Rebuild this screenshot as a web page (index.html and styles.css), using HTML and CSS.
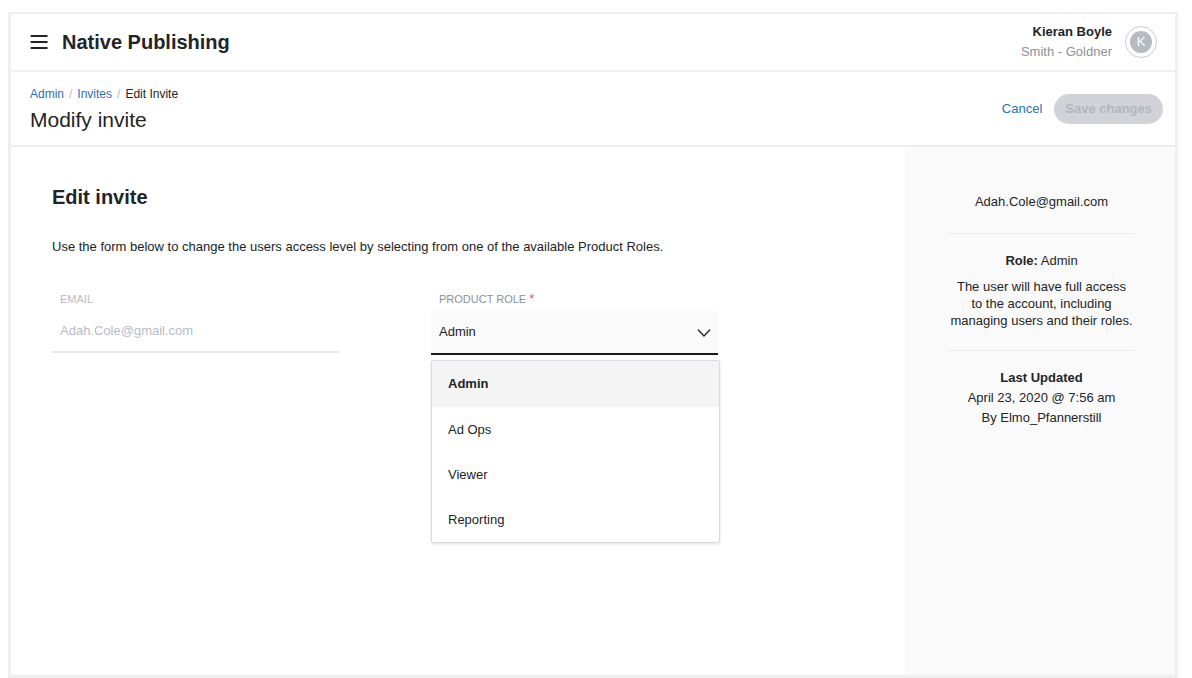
FILE: index.html
```html
<!DOCTYPE html>
<html lang="en">
<head>
<meta charset="utf-8">
<meta name="viewport" content="width=device-width, initial-scale=1">
<title>Native Publishing – Modify invite</title>
<link rel="stylesheet" href="styles.css">
</head>
<body>
<div class="frame">
  <header class="topbar">
    <button class="menu-button" type="button" aria-label="Open menu">
      <svg width="18" height="14" viewBox="0 0 18 14" fill="none" stroke="currentColor" stroke-width="1.8" stroke-linecap="round" aria-hidden="true">
        <path d="M1.3 1h15.6M1.3 7h15.6M1.3 13h15.6"/>
      </svg>
    </button>
    <div class="brand">Native Publishing</div>
    <div class="account">
      <div class="account-name">Kieran Boyle</div>
      <div class="account-org">Smith - Goldner</div>
    </div>
    <div class="avatar"><span class="avatar-letter">K</span></div>
  </header>

  <div class="pagebar">
    <div class="pagebar-titles">
      <nav class="breadcrumb" aria-label="Breadcrumb">
        <a href="#admin">Admin</a><span class="slash">/</span><a href="#invites">Invites</a><span class="slash">/</span><span>Edit Invite</span>
      </nav>
      <h1 class="page-title">Modify invite</h1>
    </div>
    <a class="cancel" href="#cancel">Cancel</a>
    <button class="save" type="submit" form="invite-form" disabled>Save changes</button>
  </div>

  <div class="content">
    <main class="main">
      <h2 class="section-title">Edit invite</h2>
      <p class="intro">Use the form below to change the users access level by selecting from one of the available Product Roles.</p>
      <form class="fields" id="invite-form">
        <div class="field field-disabled">
          <label class="label" for="email">EMAIL</label>
          <input class="control" id="email" type="email" value="Adah.Cole@gmail.com" disabled>
        </div>
        <div class="field">
          <label class="label" for="role">PRODUCT ROLE <span class="required">*</span></label>
          <div class="select-wrap">
            <select class="control select" id="role" required>
              <option selected>Admin</option>
              <option>Ad Ops</option>
              <option>Viewer</option>
              <option>Reporting</option>
            </select>
            <svg class="chevron" width="14" height="8" viewBox="0 0 14 8" fill="none" stroke="currentColor" stroke-width="1.3" stroke-linecap="round" stroke-linejoin="round" aria-hidden="true">
              <path d="M1.3 1L7 7l5.7-6"/>
            </svg>
            <ul class="menu" role="listbox" aria-label="Product role">
              <li class="menu-item menu-item-active" role="option" aria-selected="true">Admin</li>
              <li class="menu-item" role="option" aria-selected="false">Ad Ops</li>
              <li class="menu-item" role="option" aria-selected="false">Viewer</li>
              <li class="menu-item" role="option" aria-selected="false">Reporting</li>
            </ul>
          </div>
        </div>
      </form>
    </main>

    <aside class="sidebar">
      <section class="info">Adah.Cole@gmail.com</section>
      <section class="info">
        <div><strong>Role:</strong> Admin</div>
        <p class="role-text">The user will have full access<br>to the account, including<br>managing users and their roles.</p>
      </section>
      <section class="info">
        <div><strong>Last Updated</strong></div>
        <div>April 23, 2020 @ 7:56 am</div>
        <div>By Elmo_Pfannerstill</div>
      </section>
    </aside>
  </div>
</div>
</body>
</html>
```

FILE: styles.css
```css
* {
  box-sizing: border-box;
}

body {
  margin: 0;
  min-height: 100vh;
  padding: 12px 14px 0 8px;
  display: flex;
  background: #fff;
  color: #222427;
  font-family: "Liberation Sans", Arial, sans-serif;
  font-size: 13px;
  line-height: 20px;
}

a {
  color: #2a71b9;
  text-decoration: none;
}

button,
input,
select {
  font: inherit;
}

.frame {
  flex: 1;
  display: flex;
  flex-direction: column;
  border: 3px solid #efefef;
  border-top-width: 2px;
}

.topbar {
  display: flex;
  align-items: center;
  padding: 8px 18px 8px 19px;
  border-bottom: 2px solid #f0f0f0;
}

.menu-button {
  display: flex;
  padding: 0;
  border: 0;
  background: none;
  color: #222427;
}

.brand {
  flex: 1;
  padding-left: 14px;
  font-size: 20px;
  font-weight: bold;
  line-height: 28px;
}

.account {
  text-align: right;
}

.account-name {
  font-weight: bold;
}

.account-org {
  color: #8a9299;
}

.avatar {
  width: 32px;
  height: 32px;
  margin-left: 13px;
  padding: 4px;
  border: 1px solid #c9ccd4;
  border-radius: 50%;
}

.avatar-letter {
  display: flex;
  align-items: center;
  justify-content: center;
  height: 100%;
  border-radius: 50%;
  background: #b6bac3;
  color: #fff;
}

.pagebar {
  display: flex;
  align-items: center;
  padding: 12px 12px 12px 19px;
  border-bottom: 2px solid #ececec;
}

.pagebar-titles {
  flex: 1;
}

.breadcrumb {
  display: flex;
  gap: 5px;
  font-size: 12px;
}

.slash {
  color: #b6bac3;
}

.page-title {
  margin: 3px 0 0;
  font-size: 21px;
  font-weight: normal;
  line-height: 26px;
}

.cancel {
  margin-right: 12px;
}

.save {
  height: 30px;
  padding: 0 11px;
  border: 0;
  border-radius: 15px;
  background: #d2d3d8;
  color: #b3b7bc;
  font-weight: bold;
}

.content {
  flex: 1;
  display: flex;
}

.main {
  flex: 1;
  padding: 36px 187px 36px 41px;
}

.section-title {
  margin: 0;
  font-size: 20px;
  line-height: 28px;
}

.intro {
  margin: 26px 0 32px;
}

.fields {
  display: grid;
  grid-template-columns: 1fr 1fr;
  gap: 92px;
}

.field {
  color: #222427;
}

.field-disabled {
  color: #b9bcc5;
}

.label {
  display: block;
  padding: 0 8px;
  color: #8a9299;
  font-size: 11px;
}

.field-disabled .label {
  color: inherit;
}

.required {
  color: #f0524d;
  font-size: 13px;
  line-height: 1;
}

.control {
  display: block;
  width: 100%;
  height: 44px;
  padding: 0 8px;
  border: 0;
  border-radius: 0;
  border-bottom: 2px solid #e8e9ee;
  outline: 0;
  appearance: none;
  background: none;
  color: inherit;
}

.select-wrap {
  position: relative;
  margin-top: 2px;
}

.select {
  border-bottom-color: #191a1c;
  background: #fafafa;
}

.chevron {
  position: absolute;
  top: 18px;
  right: 7px;
  pointer-events: none;
}

.menu {
  position: absolute;
  top: 49px;
  left: 0;
  right: -2px;
  margin: 0;
  padding: 0;
  border: 1px solid #d9dbe1;
  border-radius: 2px;
  background: #fff;
  box-shadow: 0 1px 3px rgba(0, 0, 0, 0.12);
  list-style: none;
}

.menu-item {
  padding: 13px 16px 12px;
}

.menu-item-active {
  padding-bottom: 13px;
  background: #f4f4f4;
  font-weight: bold;
}

.sidebar {
  width: 270px;
  padding: 24px 40px 24px 43px;
  background: #fafafa;
  text-align: center;
}

.info {
  padding: 21px 0;
}

.info + .info {
  border-top: 1px solid #e9ebec;
  padding-top: 17px;
}

.role-text {
  margin: 7px 0 0;
  line-height: 17px;
}
```
